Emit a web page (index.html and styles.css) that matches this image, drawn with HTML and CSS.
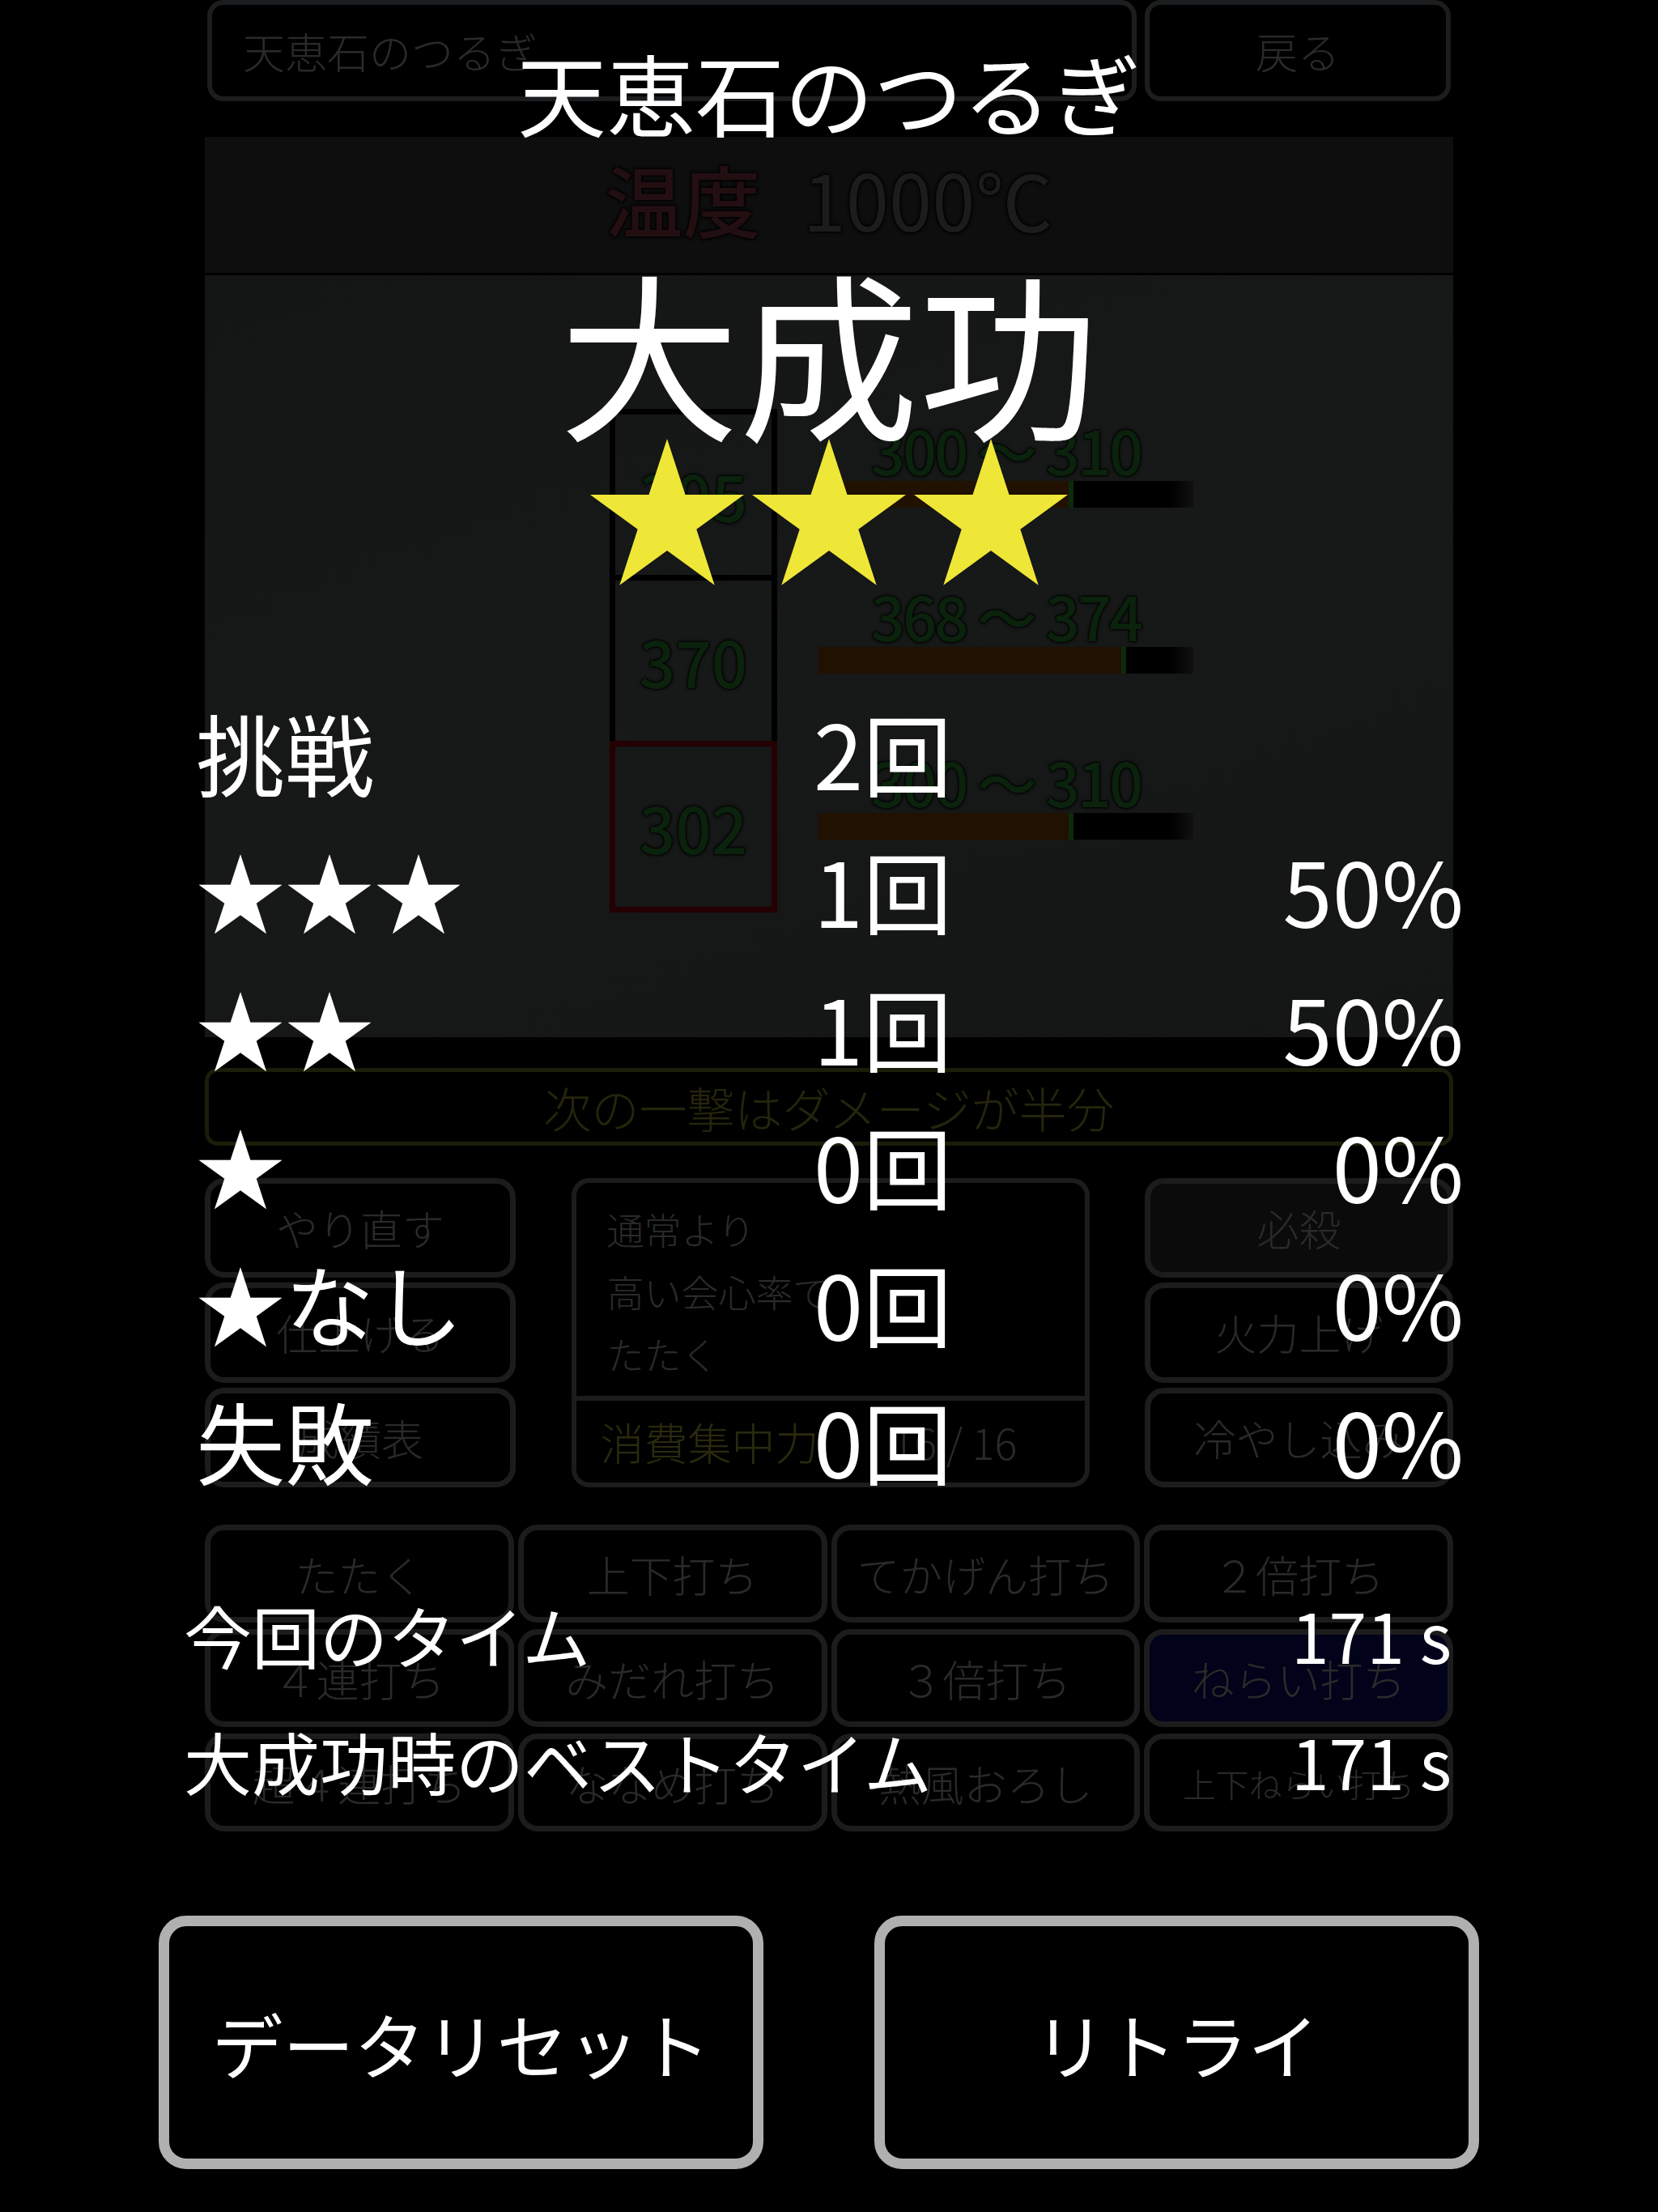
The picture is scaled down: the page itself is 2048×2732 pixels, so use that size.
FILE: index.html
```html
<!DOCTYPE html>
<html lang="ja">
<head>
    <meta charset="UTF-8">
    <meta name="viewport" content="width=device-width, initial-scale=1.0">
    <title>天恵石のつるぎ - 結果</title>
    <link rel="stylesheet" href="styles.css">
</head>
<body>
  <div class="game">
    <div class="topbar">
        <div class="name-box">天恵石のつるぎ</div>
        <div class="back-btn">戻る</div>
    </div>
    <div class="temp">
        <span class="temp-label">温度</span>
        <span class="temp-value">1000℃</span>
    </div>
    <div class="anvil">
        <div class="cells">
            <div class="cell">305</div>
            <div class="cell">370</div>
            <div class="cell miss">302</div>
        </div>
        <div class="gauges">
            <div class="gauge">
                <div class="gauge-range">300 ～ 310</div>
                <div class="gauge-bar"><div class="gauge-fill" style="width: 68%"></div></div>
            </div>
            <div class="gauge">
                <div class="gauge-range">368 ～ 374</div>
                <div class="gauge-bar"><div class="gauge-fill" style="width: 82%"></div></div>
            </div>
            <div class="gauge">
                <div class="gauge-range">300 ～ 310</div>
                <div class="gauge-bar"><div class="gauge-fill" style="width: 68%"></div></div>
            </div>
        </div>
    </div>
    <div class="hint">次の一撃はダメージが半分</div>
    <div class="controls">
        <div class="side-col">
            <div class="btn">やり直す</div>
            <div class="btn">仕上げる</div>
            <div class="btn">成績表</div>
        </div>
        <div class="skill-info">
            <div class="skill-desc">通常より<br>高い会心率で<br>たたく</div>
            <div class="skill-cost">
                <span class="cost-label">消費集中力</span>
                <span class="cost-value">16 / 16</span>
            </div>
        </div>
        <div class="side-col">
            <div class="btn special">必殺</div>
            <div class="btn">火力上げ</div>
            <div class="btn">冷やし込み</div>
        </div>
    </div>
    <div class="skills">
        <div class="btn">たたく</div>
        <div class="btn">上下打ち</div>
        <div class="btn">てかげん打ち</div>
        <div class="btn">２倍打ち</div>
        <div class="btn">４連打ち</div>
        <div class="btn">みだれ打ち</div>
        <div class="btn">３倍打ち</div>
        <div class="btn selected">ねらい打ち</div>
        <div class="btn">超４連打ち</div>
        <div class="btn">ななめ打ち</div>
        <div class="btn">熱風おろし</div>
        <div class="btn small">上下ねらい打ち</div>
    </div>
  </div>

  <!-- result dialog over the dimmed game screen -->
  <div class="result">
    <div class="result-title">天恵石のつるぎ</div>
    <div class="result-grade">大成功</div>
    <div class="result-stars">
        <svg class="star" viewBox="0 0 190 181"><polygon points="95,0 117.5,69 190,69 131.3,111.7 153.7,180.7 95,138.1 36.3,180.7 58.7,111.7 0,69 72.5,69"/></svg>
        <svg class="star" viewBox="0 0 190 181"><polygon points="95,0 117.5,69 190,69 131.3,111.7 153.7,180.7 95,138.1 36.3,180.7 58.7,111.7 0,69 72.5,69"/></svg>
        <svg class="star" viewBox="0 0 190 181"><polygon points="95,0 117.5,69 190,69 131.3,111.7 153.7,180.7 95,138.1 36.3,180.7 58.7,111.7 0,69 72.5,69"/></svg>
    </div>
    <div class="stats">
        <div>挑戦</div><div>2回</div><div></div>
        <div>★★★</div><div>1回</div><div class="pct">50%</div>
        <div>★★</div><div>1回</div><div class="pct">50%</div>
        <div>★</div><div>0回</div><div class="pct">0%</div>
        <div>★なし</div><div>0回</div><div class="pct">0%</div>
        <div>失敗</div><div>0回</div><div class="pct">0%</div>
    </div>
    <div class="times">
        <div>今回のタイム</div><div class="time">171 s</div>
        <div>大成功時のベストタイム</div><div class="time">171 s</div>
    </div>
    <div class="actions">
        <div class="action-btn">データリセット</div>
        <div class="action-btn">リトライ</div>
    </div>
  </div>
</body>
</html>
```

FILE: styles.css
```css
body {
    font-family: "Noto Sans CJK JP", "Noto Sans", sans-serif;
    font-weight: 300;
    background-color: #000;
    margin: 0;
    padding: 0;
    width: 2048px;
    height: 2732px;
    position: relative;
    overflow: hidden;
    color: #2a2a2a;
}
.game {
    width: 1542px;
    margin: 0 auto;
}
.topbar {
    display: flex;
    gap: 10px;
    height: 125px;
    margin: 0 3px;
}
.name-box {
    flex: 1;
    box-sizing: border-box;
    border: 6px solid #1b1d1f;
    border-radius: 20px;
    display: flex;
    align-items: center;
    padding-left: 38px;
    font-size: 52px;
}
.back-btn {
    width: 378px;
    box-sizing: border-box;
    border: 6px solid #1b1d1f;
    border-radius: 20px;
    display: flex;
    align-items: center;
    justify-content: center;
    font-size: 52px;
}
.temp {
    margin-top: 44px;
    height: 168px;
    box-sizing: border-box;
    padding-bottom: 18px;
    background-color: #0e0e0e;
    display: flex;
    justify-content: center;
    align-items: center;
    gap: 52px;
    font-size: 96px;
    font-weight: 500;
}
.temp-label {
    color: #230e12;
    text-shadow: 0 0 4px #000, 0 0 4px #000, 0 0 2px #000;
}
.temp-value {
    color: #1c1c1c;
    font-weight: 400;
    text-shadow: 0 0 4px #000, 0 0 4px #000, 0 0 2px #000;
}
.anvil {
    margin-top: 3px;
    height: 941px;
    box-sizing: border-box;
    background: linear-gradient(160deg, #141515, #171818 50%, #141515);
    display: flex;
    padding: 165px 0 0 500px;
}
.cells {
    width: 207px;
}
.cell {
    height: 212px;
    box-sizing: border-box;
    border: 7px solid #000;
    display: flex;
    align-items: center;
    justify-content: center;
    font-size: 78px;
    font-weight: 500;
    color: #0b220d;
    text-shadow: 0 0 4px #000, 0 0 3px #000, 0 0 2px #000;
}
.cell + .cell {
    margin-top: -7px;
}
.cell.miss {
    border-color: #240003;
}
.gauges {
    width: 463px;
    margin-left: 51px;
}
.gauge {
    height: 205px;
    box-sizing: border-box;
    padding-top: 14px;
}
.gauge-range {
    text-align: center;
    font-size: 74px;
    font-weight: 500;
    line-height: 72px;
    letter-spacing: -3px;
    color: #0b220d;
    text-shadow: 0 0 4px #000, 0 0 3px #000, 0 0 2px #000;
}
.gauge-bar {
    margin-top: 3px;
    height: 33px;
    background: linear-gradient(90deg, #000 94%, #111 100%);
}
.gauge-fill {
    height: 100%;
    box-sizing: border-box;
    background-color: #201100;
    border-right: 6px solid #0c2a0e;
}
.hint {
    margin-top: 38px;
    height: 96px;
    box-sizing: border-box;
    border: 5px solid #1c1c0a;
    border-radius: 16px;
    display: flex;
    align-items: center;
    justify-content: center;
    font-size: 59px;
    color: #25250d;
}
.controls {
    margin-top: 40px;
    height: 382px;
    display: grid;
    grid-template-columns: 384px 640px 381px;
    justify-content: space-between;
}
.side-col {
    display: flex;
    flex-direction: column;
    gap: 6px;
}
.side-col .btn {
    flex: 1;
}
.btn {
    box-sizing: border-box;
    border: 7px solid #1c1c1c;
    border-radius: 24px;
    display: flex;
    align-items: center;
    justify-content: center;
    font-size: 52px;
    color: #2a2a2a;
    white-space: nowrap;
}
.btn.special {
    background-color: #0b0b0b;
}
.btn.selected {
    background-color: #02021a;
}
.btn.small {
    font-size: 41px;
}
.skill-info {
    box-sizing: border-box;
    border: 6px solid #1c1c1c;
    border-radius: 22px;
    display: flex;
    flex-direction: column;
}
.skill-desc {
    flex: 1;
    padding: 18px 0 0 38px;
    font-size: 46px;
    line-height: 77px;
}
.skill-cost {
    height: 101px;
    border-top: 6px solid #1c1c1c;
    display: flex;
    align-items: center;
    padding-left: 30px;
    font-size: 54px;
}
.cost-label {
    color: #2a2a0e;
}
.cost-value {
    margin-left: 90px;
    font-size: 52px;
}
.skills {
    margin-top: 46px;
    display: grid;
    grid-template-columns: repeat(4, 1fr);
    grid-auto-rows: 121px;
    gap: 8px 5px;
}
.skills .btn {
    font-size: 53px;
}
.skills .btn.small {
    font-size: 41px;
}

/* result dialog */
.result {
    position: absolute;
    top: 0;
    left: 0;
    width: 2048px;
    height: 2732px;
    display: flex;
    flex-direction: column;
    color: #fff;
    font-weight: 400;
}
.result-title {
    align-self: center;
    margin-top: 58px;
    font-size: 110px;
    line-height: 110px;
}
.result-grade {
    align-self: center;
    margin-top: 152px;
    font-size: 222px;
    line-height: 222px;
}
.result-stars {
    align-self: center;
    display: flex;
    gap: 10px;
    height: 181px;
}
.star {
    width: 190px;
    height: 181px;
    fill: #efe737;
}
.stats {
    margin: 120px 0 0 242px;
    width: 1566px;
    display: grid;
    grid-template-columns: 763px 1fr auto;
    grid-auto-rows: 170px;
    align-items: center;
    font-size: 110px;
    line-height: 170px;
}
.pct {
    text-align: right;
}
.times {
    margin: 78px 0 0 227px;
    width: 1566px;
    display: grid;
    grid-template-columns: 1fr auto;
    grid-auto-rows: 156px;
    font-size: 84px;
    line-height: 156px;
}
.time {
    text-align: right;
}
.actions {
    margin: 113px 0 0 196px;
    display: flex;
    gap: 137px;
}
.action-btn {
    width: 747px;
    height: 313px;
    box-sizing: border-box;
    border: 13px solid #b0b0b0;
    border-radius: 34px;
    background-color: #000;
    display: flex;
    align-items: center;
    justify-content: center;
    font-size: 88px;
}
```
